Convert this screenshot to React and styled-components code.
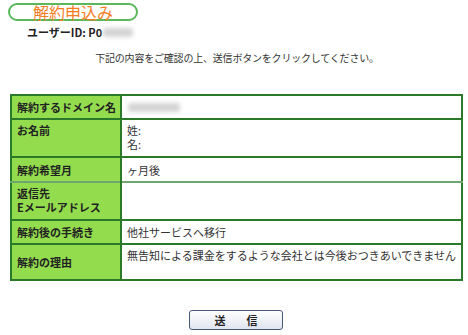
import styled, { createGlobalStyle } from 'styled-components'

const GlobalStyle = createGlobalStyle`
	html, body {
		margin: 0;
		padding: 0;
		background: #ffffff;
	}
	body {
		font-family: "Noto Sans CJK JP", "Liberation Sans", sans-serif;
		font-size: 11px;
		color: #333333;
	}
`

const rows = [
	{ label: ['解約するドメイン名'], height: 24, blur: true },
	{ label: ['お名前'], height: 38, top: true, value: ['姓:', '名:'] },
	{ label: ['解約希望月'], height: 25, value: ['ヶ月後'], soft: true },
	{ label: ['返信先', 'Eメールアドレス'], height: 38, top: true, value: [] },
	{ label: ['解約後の手続き'], height: 24, value: ['他社サービスへ移行'] },
	{
		label: ['解約の理由'],
		height: 36,
		valueTop: true,
		value: ['無告知による課金をするような会社とは今後おつきあいできません'],
	},
]

function App() {
	return (
		<>
			<GlobalStyle />
			<S.Page>
				<S.TitlePill>解約申込み</S.TitlePill>
				<S.UserId>
					ユーザーID: P0<S.Masked $w={30} />
				</S.UserId>
				<S.Notice>下記の内容をご確認の上、送信ボタンをクリックしてください。</S.Notice>
				<S.Table>
					<tbody>
						{rows.map((row, i) => (
							<S.Row key={i} $h={row.height} $soft={row.soft}>
								<S.Label $top={row.top}>
									{row.label.map(l => (
										<S.Line key={l}>{l}</S.Line>
									))}
								</S.Label>
								<S.Value $top={row.top || row.valueTop}>
									{row.blur && <S.Masked $w={52} />}
									{row.value &&
										row.value.map(v => <S.Line key={v}>{v}</S.Line>)}
								</S.Value>
							</S.Row>
						))}
					</tbody>
				</S.Table>
				<S.ButtonRow>
					<S.SendButton type="button">送　信</S.SendButton>
				</S.ButtonRow>
			</S.Page>
		</>
	)
}
export default App

const Page = styled.div`
	width: 468px;
	height: 335px;
	padding-top: 3px;
	box-sizing: border-box;
`

const TitlePill = styled.div`
	margin-left: 8px;
	width: 130px;
	height: 18px;
	box-sizing: border-box;
	border: 2px solid #5cb85c;
	border-radius: 10px;
	display: flex;
	align-items: center;
	justify-content: center;
	color: #f47d1f;
	font-size: 16px;
	line-height: 16px;
`

const UserId = styled.div`
	display: flex;
	align-items: center;
	margin-top: 5px;
	padding-left: 27px;
	font-weight: bold;
	color: #222222;
	font-size: 11px;
	line-height: 13px;
`

const Masked = styled.span`
	display: inline-block;
	width: ${p => p.$w}px;
	height: 9px;
	margin-left: 1px;
	background: #d4d4d4;
	filter: blur(2px);
	border-radius: 3px;
`

const Notice = styled.div`
	margin-top: 12px;
	padding-left: 6px;
	text-align: center;
	font-size: 10px;
	line-height: 13px;
	letter-spacing: -0.2px;
	color: #333333;
`

const Table = styled.table`
	margin: 30px 0 0 10px;
	width: 453px;
	border-collapse: collapse;
	border: 2px solid #2a7a2a;
`

const Row = styled.tr`
	height: ${p => p.$h}px;
	border-bottom: 2px solid ${p => (p.$soft ? '#6fa66f' : '#2a7a2a')};
`

const Line = styled.div`
	line-height: 14px;
`

const Label = styled.td`
	width: 97px;
	padding: ${p => (p.$top ? '3px 4px 0 5px' : '0 4px 0 5px')};
	vertical-align: ${p => (p.$top ? 'top' : 'middle')};
	background: #93dc4e;
	border-right: 2px solid #2a7a2a;
	font-weight: bold;
	color: #222222;
	font-size: 11px;
	white-space: nowrap;
`

const Value = styled.td`
	padding: ${p => (p.$top ? '3px 4px 0 5px' : '0 4px 0 5px')};
	vertical-align: ${p => (p.$top ? 'top' : 'middle')};
	background: #ffffff;
	font-size: 11px;
	color: #333333;
	white-space: nowrap;
`

const ButtonRow = styled.div`
	display: flex;
	justify-content: center;
	margin-top: 29px;
	padding-left: 4px;
`

const SendButton = styled.button`
	width: 94px;
	height: 20px;
	border: 1px solid #4a5878;
	border-radius: 3px;
	background: linear-gradient(#ffffff, #dfe4ee);
	font-family: "Noto Sans CJK JP", sans-serif;
	font-size: 11px;
	font-weight: bold;
	color: #222222;
	letter-spacing: 5px;
	padding: 0 0 0 5px;
	line-height: 18px;
`

const S = {
	Page,
	TitlePill,
	UserId,
	Masked,
	Notice,
	Table,
	Row,
	Line,
	Label,
	Value,
	ButtonRow,
	SendButton,
}
